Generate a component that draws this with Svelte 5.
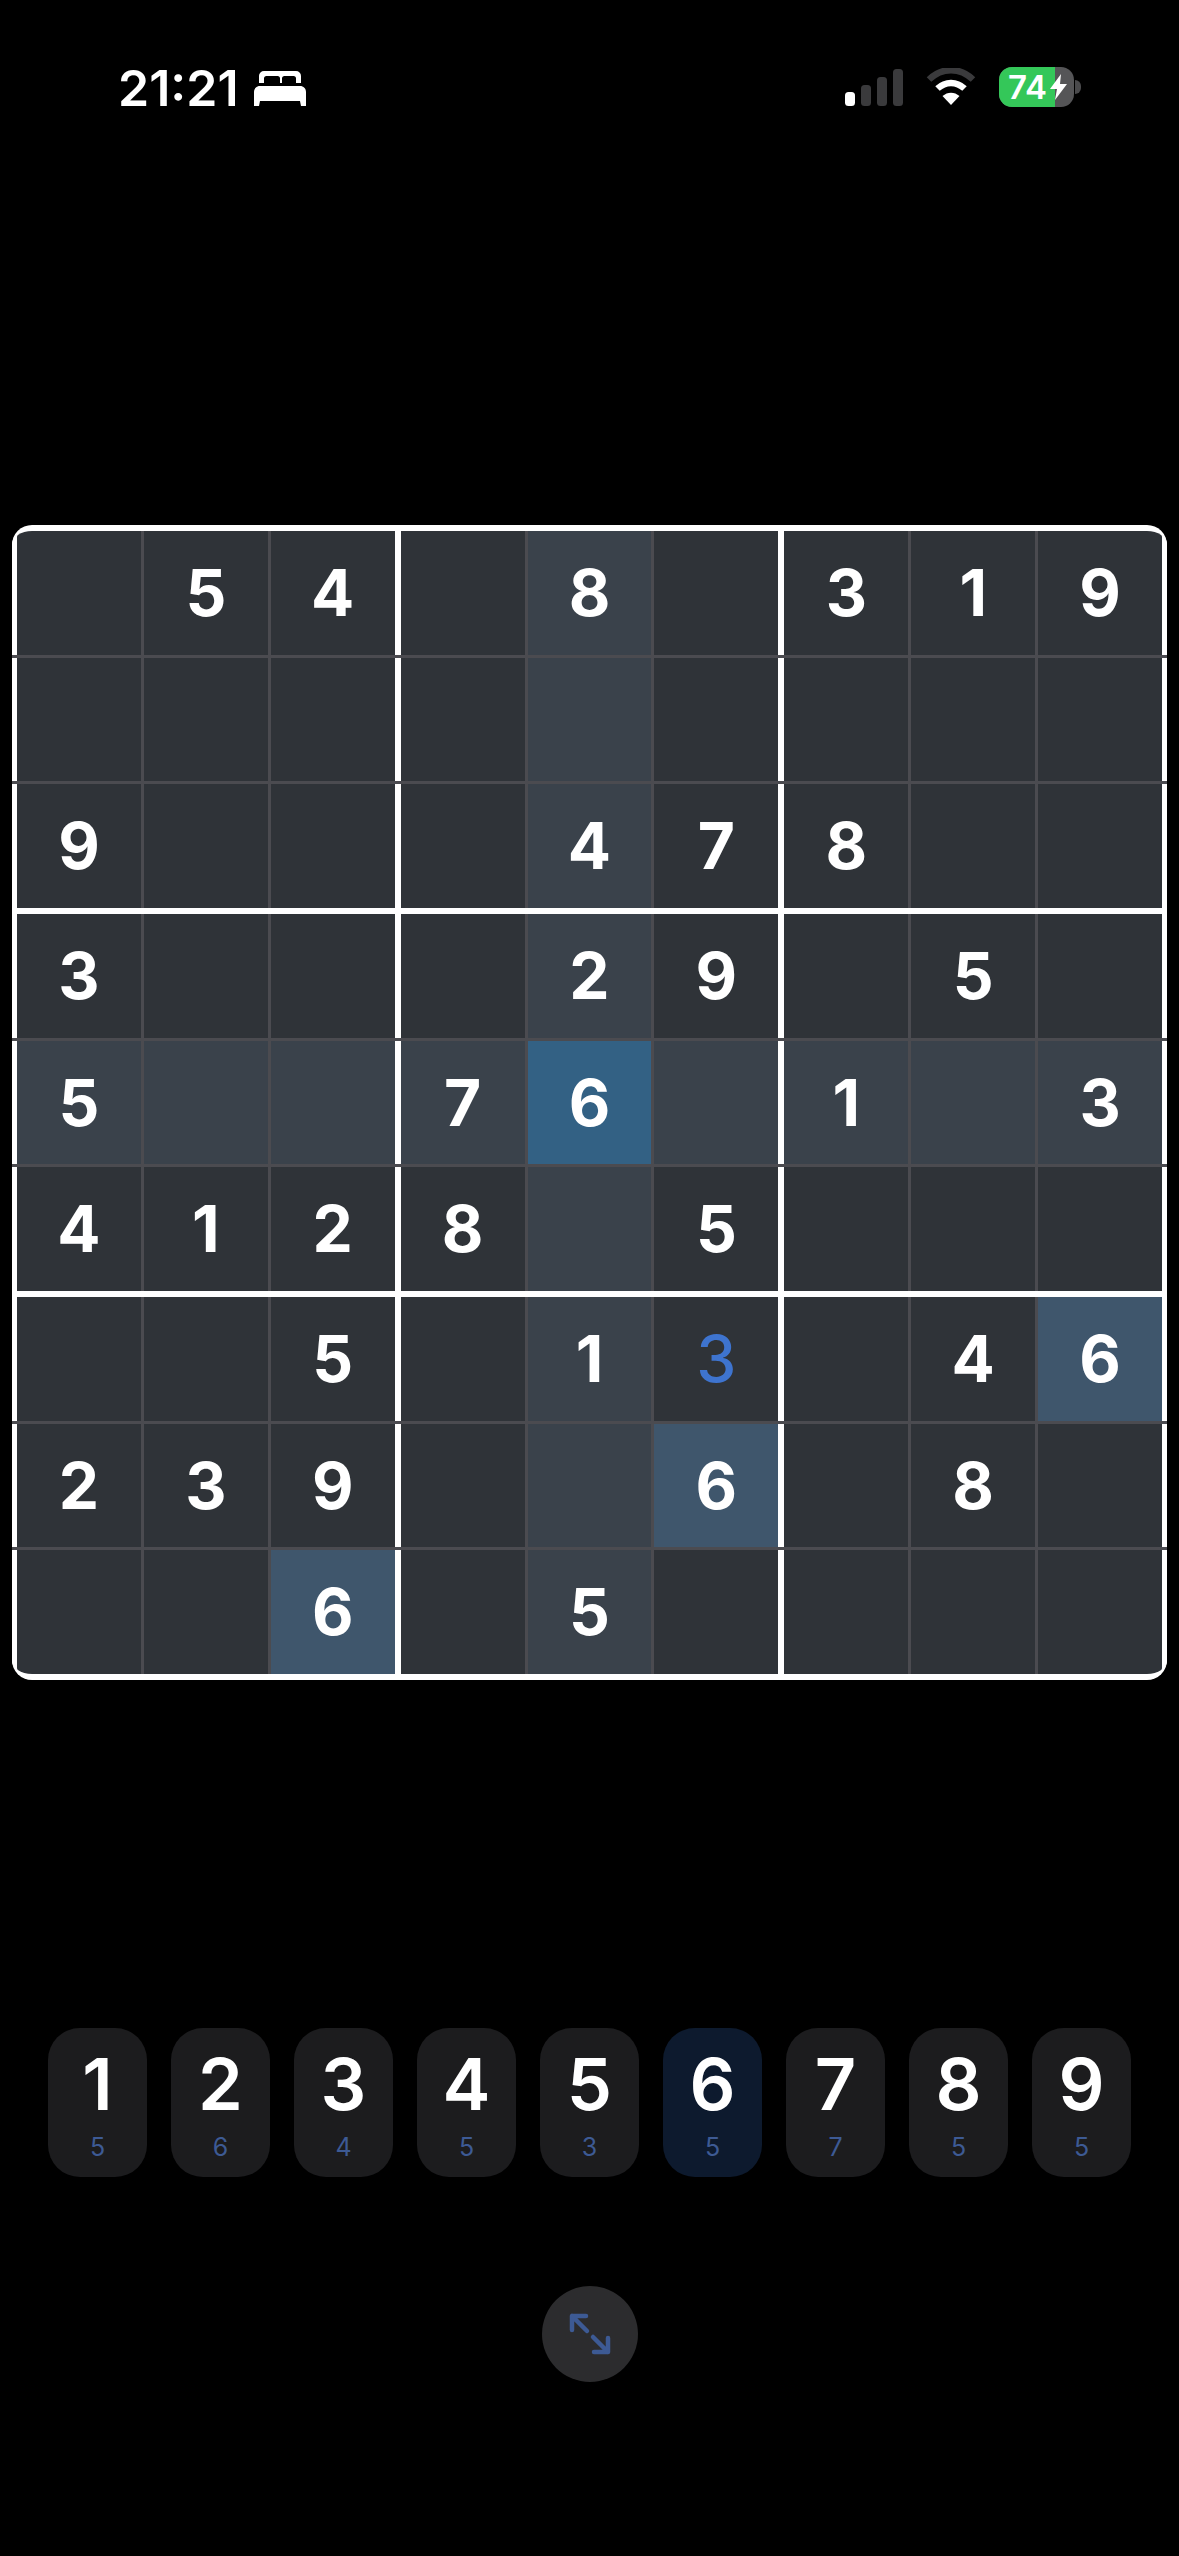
<script lang="ts">
  // 0 = empty cell. Board as shown in the puzzle.
  const board: number[][] = [
    [0, 5, 4, 0, 8, 0, 3, 1, 9],
    [0, 0, 0, 0, 0, 0, 0, 0, 0],
    [9, 0, 0, 0, 4, 7, 8, 0, 0],
    [3, 0, 0, 0, 2, 9, 0, 5, 0],
    [5, 0, 0, 7, 6, 0, 1, 0, 3],
    [4, 1, 2, 8, 0, 5, 0, 0, 0],
    [0, 0, 5, 0, 1, 3, 0, 4, 6],
    [2, 3, 9, 0, 0, 6, 0, 8, 0],
    [0, 0, 6, 0, 5, 0, 0, 0, 0]
  ];

  const selected = { r: 4, c: 4 };
  const userCells = new Set(['6,5']);
  const counts = [5, 6, 4, 5, 3, 5, 7, 5, 5];

  function cellClass(r: number, c: number) {
    const v = board[r][c];
    if (r === selected.r && c === selected.c) return 'selected';
    if (v === board[selected.r][selected.c]) return 'same';
    if (r === selected.r || c === selected.c) return 'line';
    return '';
  }
</script>

<main class="page">
  <header class="status">
    <div class="status-left">
      <span class="time">21:21</span>
      <svg class="bed" width="52" height="35" viewBox="0 0 52 35">
        <path fill="#fff" fill-rule="evenodd" d="M5 12V5a5 5 0 0 1 5-5h32a5 5 0 0 1 5 5v7zM10 12V7.500A2.500 2.500 0 0 1 12.500 5h11A2.500 2.500 0 0 1 26 7.500V12zM28 12V7.500A2.500 2.500 0 0 1 30.500 5h9A2.500 2.500 0 0 1 42 7.500V12z"/>
        <path fill="#fff" d="M6 15h40c3.500 0 6 2.500 6 6v14h-5l-1-5H6l-1 5H0V21c0-3.500 2.500-6 6-6z"/>
      </svg>
    </div>
    <div class="status-right">
      <svg width="58" height="38" viewBox="0 0 58 38">
        <rect x="0" y="24" width="10" height="14" rx="3.500" fill="#fff"/>
        <rect x="16" y="17" width="10" height="21" rx="3.500" fill="#3a3a3c"/>
        <rect x="32" y="9" width="10" height="29" rx="3.500" fill="#3a3a3c"/>
        <rect x="48" y="1" width="10" height="37" rx="3.500" fill="#3a3a3c"/>
      </svg>
      <svg class="wifi" width="50" height="38" viewBox="0 0 50 38">
        <path d="M3 11.500C16 -1 34 -1 47 11.500" fill="none" stroke="#3a3a3c" stroke-width="6.500"/>
        <path d="M11.500 20.500C19.500 13 30.500 13 38.500 20.500" fill="none" stroke="#fff" stroke-width="6.500"/>
        <path d="M25 37l-8.500-9c5-4.500 12-4.500 17 0z" fill="#fff"/>
      </svg>
      <div class="battery">
        <div class="battery-body">
          <span class="battery-fill"></span>
          <span class="battery-level">74</span>
          <svg class="bolt" width="17" height="26" viewBox="0 0 17 26">
            <path fill="#fff" d="M11 0L0 15h7L5 26 17 10h-7z"/>
          </svg>
        </div>
        <span class="battery-cap"></span>
      </div>
    </div>
  </header>

  <section class="board">
    {#each board as row, r}
      <div class="row" class:top={r === 0} class:bottom={r === 8}>
        {#each row as v, c}
          <div
            class="cell {cellClass(r, c)}"
            class:box-end={c === 2 || c === 5}
            class:tl={r === 0 && c === 0}
            class:tr={r === 0 && c === 8}
            class:bl={r === 8 && c === 0}
            class:br={r === 8 && c === 8}
          >
            {#if v}
              <span class:user={userCells.has(`${r},${c}`)}>{v}</span>
            {/if}
          </div>
        {/each}
      </div>
      {#if r < 8}
        <div class="rule" class:thick={r === 2 || r === 5}></div>
      {/if}
    {/each}
  </section>

  <nav class="pad">
    {#each counts as count, i}
      <button class="key" class:active={i === 5}>
        <span class="key-digit">{i + 1}</span>
        <span class="key-count">{count}</span>
      </button>
    {/each}
  </nav>

  <button class="expand" aria-label="Expand">
    <svg width="44" height="44" viewBox="0 0 44 44" fill="none" stroke="#3d5a94" stroke-width="4.500" stroke-linecap="round" stroke-linejoin="round">
      <path d="M4 18V4h14M4 4l15 15M40 26v14H26M40 40L25 25"/>
    </svg>
  </button>
</main>

<style>
  :global(body) {
    background: #000;
  }
  .page {
    width: 1179px;
    height: 2556px;
    background: #000;
    color: #fff;
    font-family: Inter, "Liberation Sans", sans-serif;
    display: flex;
    flex-direction: column;
    align-items: center;
    overflow: hidden;
  }
  .status {
    width: 100%;
    height: 525px;
    box-sizing: border-box;
    padding: 63px 98px 0 118px;
    display: flex;
    justify-content: space-between;
    align-items: flex-start;
  }
  .status-left {
    display: flex;
    align-items: center;
    gap: 15px;
  }
  .time {
    font-size: 50px;
    font-weight: 600;
    line-height: 50px;
  }
  .bed {
    margin-top: 1px;
  }
  .status-right {
    display: flex;
    align-items: center;
    gap: 23px;
    margin-top: 4px;
  }
  .battery {
    display: flex;
    align-items: center;
    gap: 1px;
  }
  .battery-body {
    position: relative;
    width: 75px;
    height: 40px;
    border-radius: 13px;
    background: #555557;
    display: flex;
    align-items: center;
  }
  .battery-fill {
    position: absolute;
    left: 0;
    top: 0;
    bottom: 0;
    width: 56px;
    border-radius: 13px 0 0 13px;
    background: #34c759;
  }
  .battery-level {
    position: relative;
    margin-left: 9px;
    font-size: 33px;
    font-weight: 600;
    line-height: 40px;
  }
  .bolt {
    position: absolute;
    left: 51px;
    top: 7px;
  }
  .battery-cap {
    width: 6px;
    height: 14px;
    background: #4a4a4c;
    border-radius: 0 6px 6px 0;
  }
  .board {
    width: 1155px;
    height: 1155px;
    box-sizing: border-box;
    flex: none;
    border-top: 6px solid #fff;
    border-bottom: 6px solid #fff;
    border-radius: 20px;
    overflow: hidden;
    background: #fff;
    display: flex;
    flex-direction: column;
  }
  .row {
    flex: 1;
    min-height: 0;
    display: flex;
    background: #4b4b50;
    padding: 0 5px;
    box-shadow: inset 5px 0 0 #fff, inset -5px 0 0 #fff;
    gap: 3px;
  }
  /* keep the rounded board corners white, not line coloured */
  .row.top,
  .row.bottom {
    background: linear-gradient(to right, #fff 40px, #4b4b50 40px, #4b4b50 1100px, #fff 1100px);
  }
  .rule {
    flex: none;
    height: 3px;
    background: #4b4b50;
  }
  .rule.thick {
    height: 6px;
    background: #fff;
  }
  .cell {
    flex: 1;
    min-width: 0;
    display: flex;
    align-items: center;
    justify-content: center;
    background: #2f3338;
    font-size: 64px;
    font-weight: 700;
    line-height: 1;
  }
  .cell.tl { border-top-left-radius: 6px; }
  .cell.tr { border-top-right-radius: 6px; }
  .cell.bl { border-bottom-left-radius: 6px; }
  .cell.br { border-bottom-right-radius: 6px; }
  .cell.box-end {
    border-right: 6px solid #fff;
    margin-right: -3px;
  }
  .cell.line {
    background: #3a424b;
  }
  .cell.same {
    background: #3f566c;
  }
  .cell.selected {
    background: #336184;
  }
  .user {
    color: #3e74cf;
    font-weight: 500;
  }
  .pad {
    margin-top: 348px;
    display: flex;
    gap: 24px;
  }
  .key {
    width: 99px;
    height: 149px;
    border: none;
    border-radius: 32px;
    background: #1c1c1e;
    color: #fff;
    font-family: inherit;
    padding: 0;
    display: flex;
    flex-direction: column;
    align-items: center;
  }
  .key.active {
    background: #0d1a2e;
  }
  .key-digit {
    margin-top: 24px;
    font-size: 72px;
    font-weight: 600;
    line-height: 64px;
  }
  .key-count {
    margin-top: 18px;
    font-size: 25px;
    line-height: 26px;
    color: #3d5a94;
  }
  .expand {
    margin-top: 109px;
    width: 96px;
    height: 96px;
    border: none;
    border-radius: 50%;
    background: #2c2c2e;
    padding: 0;
    display: flex;
    align-items: center;
    justify-content: center;
  }
</style>
